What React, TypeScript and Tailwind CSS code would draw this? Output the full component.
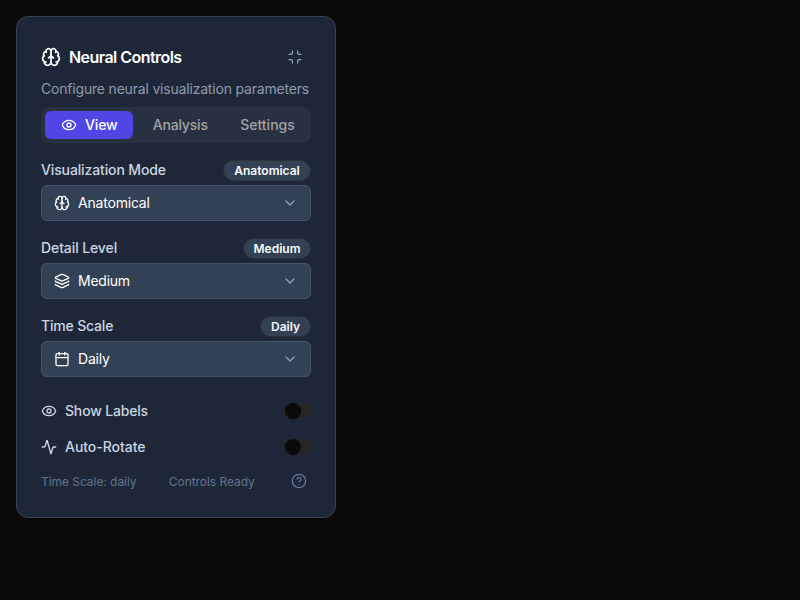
import React from 'react';
import { Brain, Minimize, Eye, Layers, Calendar, Activity, CircleHelp, ChevronDown } from 'lucide-react';

type FieldProps = { label: string; value: string; icon: React.ReactNode; badge: string; labelSpacing: string; valueSpacing: string };

function Field({ label, value, icon, badge, labelSpacing, valueSpacing }: FieldProps) {
  return (
    <div className="h-[62px]">
      <div className="flex h-[22px] items-center justify-between">
        <span className={`text-sm font-[450] text-[#cbd5e1] ${labelSpacing}`}>{label}</span>
        <span className={`flex h-[21px] items-center justify-center rounded-full border border-[#2d3235] bg-[#334155] pt-px text-xs font-semibold text-slate-50 ${badge}`}>{value}</span>
      </div>
      <div className="mt-1 flex h-9 items-center justify-between rounded-md border border-[#475569] bg-[#334155] px-3 text-sm text-white">
        <span className={`flex items-center gap-2 ${valueSpacing}`}>{icon}{value}</span>
        <ChevronDown size={16} className="text-slate-400" />
      </div>
    </div>
  );
}

function Toggle({ label, icon, spacing }: { label: string; icon: React.ReactNode; spacing: string }) {
  return (
    <div className="flex h-5 items-center justify-between">
      <span className={`flex items-center gap-2 text-sm font-[450] text-[#cbd5e1] ${spacing}`}>{icon}{label}</span>
      <span className="flex h-4 w-[27px] items-center rounded-full bg-[#262626] pl-px">
        <span className="h-4 w-4 rounded-full bg-[#0a0a0a]" />
      </span>
    </div>
  );
}

export default function App() {
  return (
    <div className="h-[600px] w-[800px] bg-[#0a0a0a] p-4 font-['Inter',sans-serif]">
      <div className="h-[502px] w-80 rounded-xl border border-[#334155] bg-[#1e2737] px-6 pt-6">
        <div className="flex h-8 items-center justify-between pr-2">
          <h1 className="flex items-center gap-2 text-base font-semibold tracking-[-0.54px] text-white"><Brain size={20} />Neural Controls</h1>
          <Minimize size={16} className="text-slate-400" />
        </div>
        <p className="mt-1.5 whitespace-nowrap text-sm tracking-[-0.19px] text-[#8e9bae]">Configure neural visualization parameters</p>
        <div className="mt-2 flex h-9 rounded-lg bg-[#273141] p-1 text-sm font-medium text-[#a3a3a3]">
          <span className="flex w-[87.5px] items-center justify-center gap-2 rounded-md bg-[#4f46e5] pl-px tracking-[-0.1px] text-white"><Eye size={16} />View</span>
          <span className="flex w-[95.5px] items-center justify-center tracking-[-0.2px]">Analysis</span>
          <span className="flex flex-1 items-center justify-center">Settings</span>
        </div>
        <div className="mt-4 flex flex-col gap-4">
          <Field label="Visualization Mode" value="Anatomical" icon={<Brain size={16} />} badge="w-[88px]" labelSpacing="tracking-[-0.13px]" valueSpacing="tracking-[-0.2px]" />
          <Field label="Detail Level" value="Medium" icon={<Layers size={16} />} badge="w-[68px]" labelSpacing="tracking-[-0.1px]" valueSpacing="tracking-[-0.25px]" />
          <Field label="Time Scale" value="Daily" icon={<Calendar size={16} />} badge="w-[51px]" labelSpacing="tracking-[-0.18px]" valueSpacing="tracking-[-0.2px]" />
        </div>
        <div className="mt-6 flex flex-col gap-4">
          <Toggle label="Show Labels" icon={<Eye size={16} />} spacing="tracking-[-0.17px]" />
          <Toggle label="Auto-Rotate" icon={<Activity size={16} />} spacing="tracking-[-0.04px]" />
        </div>
        <div className="mt-2 flex h-8 items-center justify-between pr-1 text-xs text-slate-500">
          <span className="pt-0.5 tracking-[-0.05px]">Time Scale: daily</span><span className="mr-1 pt-0.5 tracking-[-0.05px]">Controls Ready</span><CircleHelp size={16} />
        </div>
      </div>
    </div>
  );
}
